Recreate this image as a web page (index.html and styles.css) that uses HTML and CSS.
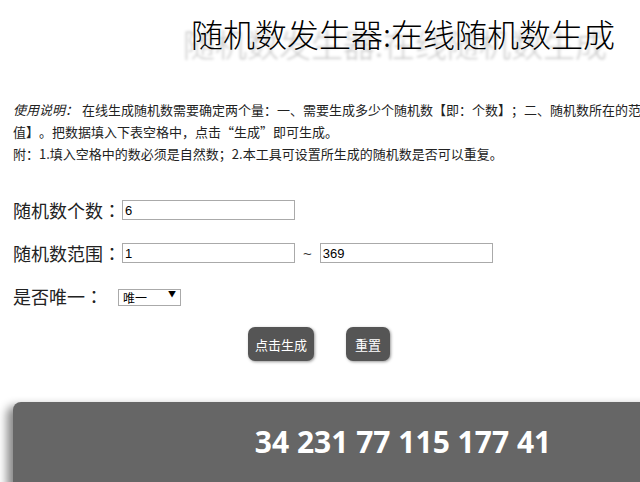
FILE: index.html
```html
<!DOCTYPE html>
<html lang="zh-CN">

<head>
    <meta charset="UTF-8">
    <meta name="viewport" content="width=device-width, initial-scale=1.0">
    <title>随机数发生器</title>
    <link rel="stylesheet" href="styles.css">
</head>

<body>
    <div class="wrap">
        <h1 class="title">随机数发生器:在线随机数生成</h1>

        <div class="intro">
            <p><em>使用说明：</em>在线生成随机数需要确定两个量：一、需要生成多少个随机数【即：个数】；二、随机数所在的范围【即：最小值和最大值】。把数据填入下表空格中，点击“生成”即可生成。</p>
            <p>附：1.填入空格中的数必须是自然数；2.本工具可设置所生成的随机数是否可以重复。</p>
        </div>

        <div class="form">
            <div class="row">
                <label>随机数个数<span class="colon" lang="zh-Hant">：</span></label>
                <input type="text" class="ipt" value="6">
            </div>
            <div class="row">
                <label>随机数范围<span class="colon" lang="zh-Hant">：</span></label>
                <input type="text" class="ipt" value="1">
                <span class="tilde">~</span>
                <input type="text" class="ipt" value="369">
            </div>
            <div class="row">
                <label>是否唯一<span class="colon" lang="zh-Hant">：</span></label>
                <span class="sel-box">
                    <select class="sel">
                        <option>唯一</option>
                        <option>可重复</option>
                    </select>
                </span>
            </div>
            <div class="btns">
                <button class="btn btn-go">点击生成</button>
                <button class="btn btn-reset">重置</button>
            </div>
        </div>

        <div class="result">34 231 77 115 177 41</div>
    </div>
</body>

</html>
```

FILE: styles.css
```css
html,
body {
    margin: 0;
    padding: 0;
    overflow: hidden; /* 页面比窗口宽，不显示滚动条 */
    background: #fff;
}

body {
    font-family: "Noto Sans CJK SC", "Noto Sans", sans-serif;
    color: #222;
    text-spacing-trim: space-all;
}

.wrap {
    width: 780px;
    padding: 0 13px;
}

/* 标题 */
.title {
    margin: 13px 0 0;
    font-size: 32px;
    line-height: 40px;
    font-weight: 300;
    text-align: center;
    color: #000;
    text-shadow: -8px 10px 3px #c8c8c8;
}

/* 说明文字 */
.intro {
    margin-top: 46px;
    width: 760px;
    font-size: 13px;
    line-height: 22px;
    color: #222;
}

.intro p {
    margin: 0;
}

.intro em {
    font-style: italic;
    padding-right: 4px;
}

/* 表单 */
.form {
    margin-top: 35px;
}

.row {
    display: flex;
    align-items: center;
    height: 20px;
    margin-bottom: 23px;
}

.row label {
    font-size: 18px;
    line-height: 20px;
    color: #222;
}

/* 冒号居中显示 */
.row .colon {
    font-family: "Noto Sans CJK TC", "Noto Sans CJK JP", sans-serif;
}

.ipt {
    box-sizing: border-box;
    width: 173px;
    height: 20px;
    margin: 0 0 0 1px;
    padding: 0 2px;
    border: 1px solid #aaa;
    font-family: "Liberation Sans", Arial, sans-serif;
    font-size: 13px;
    color: #000;
    outline: none;
}

.tilde {
    margin: 0 7px 0 8px;
    font-family: "Liberation Sans", Arial, sans-serif;
    font-size: 15px;
    color: #333;
}

.sel-box {
    position: relative;
    margin-left: 15px;
}

.sel {
    box-sizing: border-box;
    width: 63px;
    height: 17px;
    padding: 0 0 0 4px;
    border: 1px solid #aaa;
    border-radius: 0;
    background: #fff;
    font-family: "Noto Sans CJK SC", sans-serif;
    font-size: 12px;
    line-height: 15px;
    color: #000;
    -webkit-appearance: none;
    appearance: none;
}

.sel-box::after {
    content: "▼";
    position: absolute;
    right: 5px;
    top: 4px;
    font-size: 8px;
    line-height: 12px;
    color: #000;
    pointer-events: none;
}

/* 按钮 */
.btns {
    display: flex;
    justify-content: center;
    gap: 32px;
    width: 612px;
    margin-top: -2px;
}

.btn {
    height: 34px;
    padding: 0;
    border: none;
    border-radius: 7px;
    background-color: #555;
    color: #fff;
    font-family: "Noto Sans CJK SC", sans-serif;
    font-size: 13px;
    font-weight: 400;
    box-shadow: 1px 1px 3px #999;
    cursor: pointer;
}

.btn-go {
    width: 66px;
}

.btn-reset {
    width: 44px;
}

/* 结果 */
.result {
    margin-top: 41px;
    padding: 22px 0 30px;
    border-radius: 8px;
    background-color: #666;
    box-shadow: -6px 4px 10px #888;
    text-align: center;
    font-family: "Noto Sans", "Open Sans", sans-serif;
    font-size: 30px;
    font-weight: bold;
    line-height: 36px;
    color: #fff;
}
```
